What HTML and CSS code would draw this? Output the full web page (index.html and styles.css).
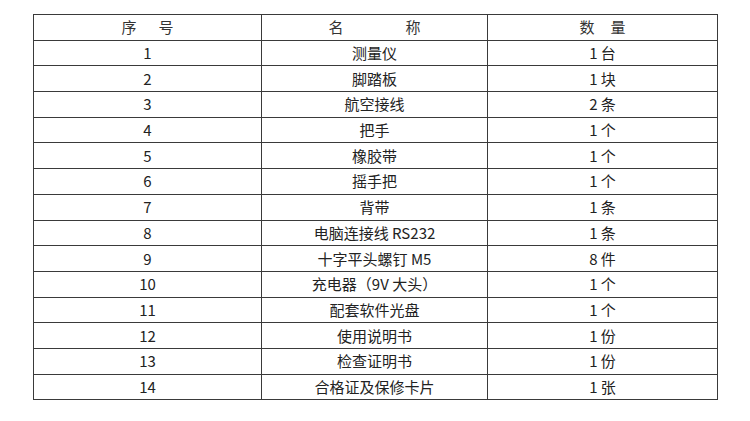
FILE: index.html
```html
<!DOCTYPE html>
<html lang="zh">
<head>
<meta charset="utf-8">
<link rel="stylesheet" href="styles.css">
</head>
<body>
<table class="list">
  <colgroup><col class="c1"><col class="c2"><col class="c3"></colgroup>
  <tr class="head">
    <td>序<span class="g1"></span>号</td>
    <td>名<span class="g2"></span>称</td>
    <td>数<span class="g3"></span>量</td>
  </tr>
  <tr><td>1</td><td>测量仪</td><td>1 台</td></tr>
  <tr><td>2</td><td>脚踏板</td><td>1 块</td></tr>
  <tr><td>3</td><td>航空接线</td><td>2 条</td></tr>
  <tr><td>4</td><td>把手</td><td>1 个</td></tr>
  <tr><td>5</td><td>橡胶带</td><td>1 个</td></tr>
  <tr><td>6</td><td>摇手把</td><td>1 个</td></tr>
  <tr><td>7</td><td>背带</td><td>1 条</td></tr>
  <tr><td>8</td><td>电脑连接线 RS232</td><td>1 条</td></tr>
  <tr><td>9</td><td>十字平头螺钉 M5</td><td>8 件</td></tr>
  <tr><td>10</td><td>充电器（9V 大头）</td><td>1 个</td></tr>
  <tr><td>11</td><td>配套软件光盘</td><td>1 个</td></tr>
  <tr><td>12</td><td>使用说明书</td><td>1 份</td></tr>
  <tr><td>13</td><td>检查证明书</td><td>1 份</td></tr>
  <tr><td>14</td><td>合格证及保修卡片</td><td>1 张</td></tr>
</table>
</body>
</html>
```
FILE: styles.css
```css
html, body {
  margin: 0;
  padding: 0;
  background: #ffffff;
}
body {
  padding: 14px 0 0 33px;
  font-family: "Noto Sans CJK SC", "Noto Sans", sans-serif;
  font-size: 15px;
  color: #222222;
}
.list {
  border-collapse: collapse;
  table-layout: fixed;
  width: 684px;
}
.c1 { width: 228px; }
.c2 { width: 226px; }
.c3 { width: 230px; }
.list td {
  border: 1px solid #3a3a3a;
  height: 24.7px;
  padding: 0;
  text-align: center;
  vertical-align: middle;
  line-height: 16px;
  white-space: nowrap;
}
.list tr.head td { color: #333333; }
.g1, .g2, .g3 { display: inline-block; }
.g1 { width: 22px; }
.g2 { width: 62px; }
.g3 { width: 16px; }
```
